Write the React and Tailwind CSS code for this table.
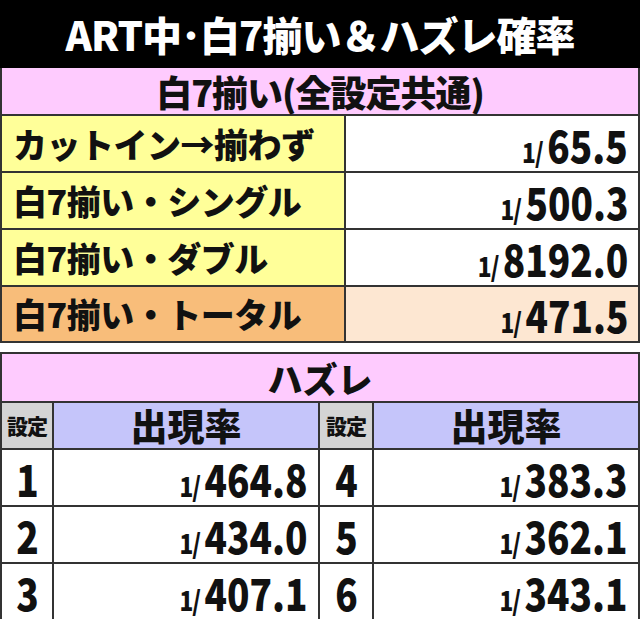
const ROWS = [
  { label: 'カットイン→揃わず', value: '65.5', left: 'bg-[#ffff99]', right: 'bg-white', h: 'h-[57px]' },
  { label: '白7揃い・シングル', value: '500.3', left: 'bg-[#ffff99]', right: 'bg-white', h: 'h-[57px]' },
  { label: '白7揃い・ダブル', value: '8192.0', left: 'bg-[#ffff99]', right: 'bg-white', h: 'h-[57px]' },
  { label: '白7揃い・トータル', value: '471.5', left: 'bg-[#f8bd7a]', right: 'bg-[#fde7d2]', h: 'h-[56px]' },
]

const HAZURE = [
  ['1', '464.8', '4', '383.3'],
  ['2', '434.0', '5', '362.1'],
  ['3', '407.1', '6', '343.1'],
]

function Prob({ value }) {
  return (
    <span className="inline-flex items-baseline origin-right scale-x-[0.84]">
      <span className="text-[27px] tracking-[-1px] mr-[5px]">1/</span>
      <span className="text-[44px]">{value}</span>
    </span>
  )
}

export default function App() {
  return (
    <div className="w-[640px] h-[619px] overflow-hidden bg-white text-[#111] font-['Noto_Sans_CJK_JP','Noto_Sans',sans-serif] font-black leading-none">
      <div className="h-[68px] bg-black text-white flex items-center justify-center text-[40px] tracking-[-1px]">
        ART中･白7揃い＆ハズレ確率
      </div>

      <div className="border-x-2 border-b-2 border-[#333]">
        <div className="h-[46px] bg-[#fecbfe] flex items-center justify-center text-[36px] tracking-[-1px]">
          白7揃い(全設定共通)
        </div>
        {ROWS.map(r => (
          <div key={r.value} className={`grid grid-cols-[344px_1fr] border-t-2 border-[#333] ${r.h}`}>
            <div className={`${r.left} border-r-2 border-[#333] flex items-center pl-[11px] text-[34px] tracking-[-0.5px]`}>
              {r.label}
            </div>
            <div className={`${r.right} flex items-center justify-end pr-[10px]`}>
              <Prob value={r.value} />
            </div>
          </div>
        ))}
      </div>

      <div className="mt-[9px] border-x-2 border-t-2 border-[#333]">
        <div className="h-[47px] bg-[#fecbfe] flex items-center justify-center text-[35px]">
          ハズレ
        </div>
        <div className="grid grid-cols-[52px_266px_54px_1fr] h-[47px] border-t-2 border-[#333]">
          <div className="bg-[#d4d4d4] border-r-2 border-[#333] flex items-center justify-center text-[21px] tracking-[-1px]">設定</div>
          <div className="bg-[#c5c5fa] border-r-2 border-[#333] flex items-center justify-center text-[37px]">出現率</div>
          <div className="bg-[#d4d4d4] border-r-2 border-[#333] flex items-center justify-center text-[21px] tracking-[-1px]">設定</div>
          <div className="bg-[#c5c5fa] flex items-center justify-center text-[37px]">出現率</div>
        </div>
        {HAZURE.map(([s1, v1, s2, v2]) => (
          <div key={s1} className="grid grid-cols-[52px_266px_54px_1fr] h-[57px] border-t-2 border-[#333]">
            <div className="border-r-2 border-[#333] flex items-center justify-center">
              <span className="inline-block text-[44px] scale-x-[0.84]">{s1}</span>
            </div>
            <div className="border-r-2 border-[#333] flex items-center justify-end pr-[11px]">
              <Prob value={v1} />
            </div>
            <div className="border-r-2 border-[#333] flex items-center justify-center">
              <span className="inline-block text-[44px] scale-x-[0.84]">{s2}</span>
            </div>
            <div className="flex items-center justify-end pr-[11px]">
              <Prob value={v2} />
            </div>
          </div>
        ))}
      </div>
    </div>
  )
}
